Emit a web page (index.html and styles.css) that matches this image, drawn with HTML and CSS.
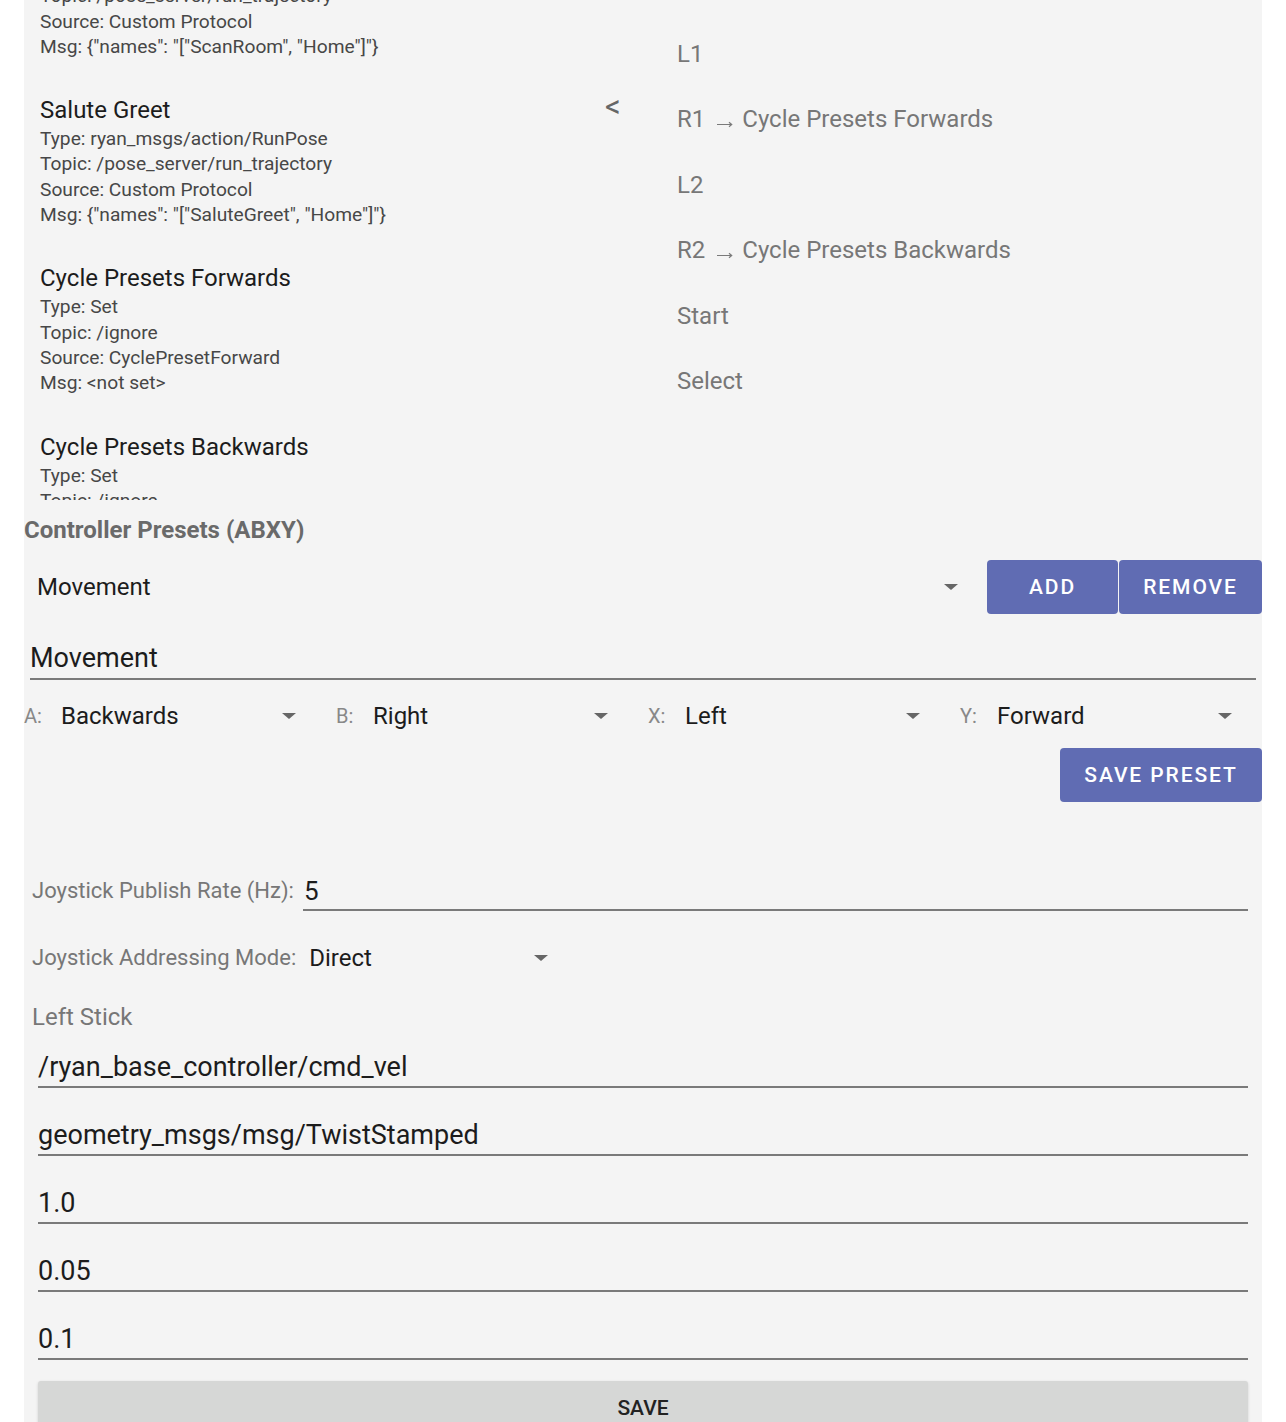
FILE: index.html
```html
<!DOCTYPE html>
<html>
<head>
<meta charset="utf-8">
<link rel="stylesheet" href="styles.css">
</head>
<body>
<div class="panel">
  <section class="top">
    <div class="list">
      <div class="list-inner">
        <div class="item">
          <div class="item-title">Scan Room</div>
          <div class="item-line">Type: ryan_msgs/action/RunPose</div>
          <div class="item-line">Topic: /pose_server/run_trajectory</div>
          <div class="item-line">Source: Custom Protocol</div>
          <div class="item-line">Msg: {"names": "["ScanRoom", "Home"]"}</div>
        </div>
        <div class="item">
          <div class="item-title">Salute Greet</div>
          <div class="item-line">Type: ryan_msgs/action/RunPose</div>
          <div class="item-line">Topic: /pose_server/run_trajectory</div>
          <div class="item-line">Source: Custom Protocol</div>
          <div class="item-line">Msg: {"names": "["SaluteGreet", "Home"]"}</div>
        </div>
        <div class="item">
          <div class="item-title">Cycle Presets Forwards</div>
          <div class="item-line">Type: Set</div>
          <div class="item-line">Topic: /ignore</div>
          <div class="item-line">Source: CyclePresetForward</div>
          <div class="item-line">Msg: &lt;not set&gt;</div>
        </div>
        <div class="item">
          <div class="item-title">Cycle Presets Backwards</div>
          <div class="item-line">Type: Set</div>
          <div class="item-line">Topic: /ignore</div>
          <div class="item-line">Source: CyclePresetBackward</div>
          <div class="item-line">Msg: &lt;not set&gt;</div>
        </div>
      </div>
    </div>
    <div class="collapse">&lt;</div>
    <ul class="mapping">
      <li>L1</li>
      <li>R1<svg class="arrow" width="30" height="10" viewBox="0 0 30 10"><path d="M12 6.5H26.5M24 4.2L26.7 6.5L24 8.8" fill="none" stroke="#7a7a7a" stroke-width="1.2"/></svg>Cycle Presets Forwards</li>
      <li>L2</li>
      <li>R2<svg class="arrow" width="30" height="10" viewBox="0 0 30 10"><path d="M12 6.5H26.5M24 4.2L26.7 6.5L24 8.8" fill="none" stroke="#7a7a7a" stroke-width="1.2"/></svg>Cycle Presets Backwards</li>
      <li>Start</li>
      <li>Select</li>
    </ul>
  </section>

  <h2 class="section-title">Controller Presets (ABXY)</h2>

  <div class="preset-row">
    <div class="select preset-select"><span class="select-value">Movement</span><span class="caret"></span></div>
    <div class="btn-group">
      <button class="btn btn-add">ADD</button>
      <button class="btn btn-remove">REMOVE</button>
    </div>
  </div>

  <div class="name-field">Movement</div>

  <div class="abxy">
    <div class="abxy-cell"><span class="abxy-label">A:</span><div class="select"><span class="select-value">Backwards</span><span class="caret"></span></div></div>
    <div class="abxy-cell"><span class="abxy-label">B:</span><div class="select"><span class="select-value">Right</span><span class="caret"></span></div></div>
    <div class="abxy-cell"><span class="abxy-label">X:</span><div class="select"><span class="select-value">Left</span><span class="caret"></span></div></div>
    <div class="abxy-cell"><span class="abxy-label">Y:</span><div class="select"><span class="select-value">Forward</span><span class="caret"></span></div></div>
  </div>

  <div class="save-preset-row">
    <button class="btn btn-save-preset">SAVE PRESET</button>
  </div>

  <div class="joystick">
    <div class="rate-row">
      <span class="field-label">Joystick Publish Rate (Hz):</span>
      <span class="rate-input">5</span>
    </div>
    <div class="mode-row">
      <span class="field-label">Joystick Addressing Mode:</span>
      <div class="select mode-select"><span class="select-value">Direct</span><span class="caret"></span></div>
    </div>
    <div class="stick-label">Left Stick</div>
    <div class="stick-fields">
      <div class="text-input">/ryan_base_controller/cmd_vel</div>
      <div class="text-input">geometry_msgs/msg/TwistStamped</div>
      <div class="text-input">1.0</div>
      <div class="text-input">0.05</div>
      <div class="text-input">0.1</div>
    </div>
    <button class="btn-save">SAVE</button>
  </div>
</div>
</body>
</html>
```
FILE: styles.css
```css
* { box-sizing: border-box; }
html, body {
  margin: 0;
  padding: 0;
  background: #ffffff;
  font-family: Roboto, "Noto Sans", "Liberation Sans", sans-serif;
}
body { height: 1422px; overflow: hidden; }

.panel {
  margin-left: 24px;
  width: 1238px;
  background: #f4f4f4;
  min-height: 1500px;
}

/* ---------- top section ---------- */
.top {
  height: 500px;
  overflow: hidden;
  display: grid;
  grid-template-columns: 581px 72px 1fr;
}
.list { overflow: hidden; padding-left: 16px; }
.list-inner { margin-top: -74px; }
.item { margin-bottom: 35px; }
.item-title {
  font-size: 24px;
  line-height: 32px;
  color: #1c1c1c;
}
.item-line {
  font-size: 19.2px;
  line-height: 25.3px;
  color: #474747;
}
.collapse {
  font-size: 31px;
  color: #666;
  line-height: 30px;
  padding-top: 92px;
}
.mapping {
  list-style: none;
  margin: 0;
  padding: 22px 0 0 0;
}
.mapping li {
  height: 65.4px;
  line-height: 65.4px;
  font-size: 24px;
  color: #777;
}
.mapping .arrow { vertical-align: -1px; margin-right: 7px; }

/* ---------- presets ---------- */
.section-title {
  margin: 15px 0 0 0;
  font-size: 24px;
  line-height: 30px;
  font-weight: 700;
  color: #6a6a6a;
}
.preset-row {
  margin-top: 15px;
  display: flex;
  align-items: center;
  height: 54px;
}
.select {
  display: flex;
  align-items: center;
  justify-content: space-between;
  font-size: 24px;
  color: #1c1c1c;
}
.caret {
  width: 0;
  height: 0;
  border-left: 7px solid transparent;
  border-right: 7px solid transparent;
  border-top: 6px solid #666;
}
.preset-select {
  flex: 1;
  padding: 0 17px 0 13px;
}
.btn-group { display: flex; margin-left: 12px; }
.btn {
  height: 54px;
  border: none;
  border-radius: 4px;
  background: #606cb3;
  color: #fff;
  font-family: Roboto, "Noto Sans", sans-serif;
  font-size: 21px;
  font-weight: 500;
  letter-spacing: 1.9px;
  padding: 0;
}
.btn-add { width: 131px; }
.btn-remove { width: 143px; margin-left: 1px; }

.name-field {
  margin: 29px 6px 0 6px;
  font-size: 27px;
  line-height: 30px;
  color: #1c1c1c;
  padding-bottom: 5px;
  border-bottom: 2px solid #7a7a7a;
}

.abxy {
  margin-top: 21px;
  display: grid;
  grid-template-columns: repeat(4, 312px);
  line-height: 30px;
}
.abxy-cell {
  display: flex;
  align-items: center;
  padding-right: 40px;
}
.abxy-label {
  width: 37px;
  font-size: 20px;
  color: #888;
}
.abxy-cell .select { flex: 1; }

.save-preset-row {
  margin-top: 17px;
  display: flex;
  justify-content: flex-end;
}
.btn-save-preset { width: 202px; }

/* ---------- joystick ---------- */
.joystick { padding: 0 14px 0 8px; }
.rate-row {
  margin-top: 74px;
  display: flex;
  align-items: flex-end;
}
.field-label {
  font-size: 22px;
  line-height: 30px;
  color: #777;
}
.rate-input {
  flex: 1;
  margin-left: 9px;
  font-size: 26px;
  line-height: 30px;
  color: #1c1c1c;
  padding: 0 0 3px 1px;
  border-bottom: 2px solid #7a7a7a;
}
.rate-row .field-label { padding-bottom: 5px; }
.mode-row {
  margin-top: 32px;
  display: flex;
  align-items: center;
  line-height: 30px;
}
.mode-select {
  width: 247px;
  margin-left: 13px;
  padding-right: 8px;
}
.stick-label {
  margin-top: 29px;
  font-size: 24px;
  line-height: 30px;
  color: #777;
}
.stick-fields { padding-left: 6px; }
.text-input {
  margin-top: 32px;
  font-size: 27px;
  line-height: 30px;
  color: #1c1c1c;
  padding-bottom: 4px;
  border-bottom: 2px solid #7a7a7a;
}
.text-input:first-child { margin-top: 20px; }
.btn-save {
  display: block;
  margin: 21px 0 0 6px;
  width: calc(100% - 6px);
  height: 54px;
  border: none;
  border-radius: 3px;
  background: #d6d7d6;
  box-shadow: 0 1px 3px rgba(0,0,0,0.15);
  font-family: Roboto, "Noto Sans", sans-serif;
  font-size: 21px;
  font-weight: 500;
  color: #222;
  padding: 0;
}
```
